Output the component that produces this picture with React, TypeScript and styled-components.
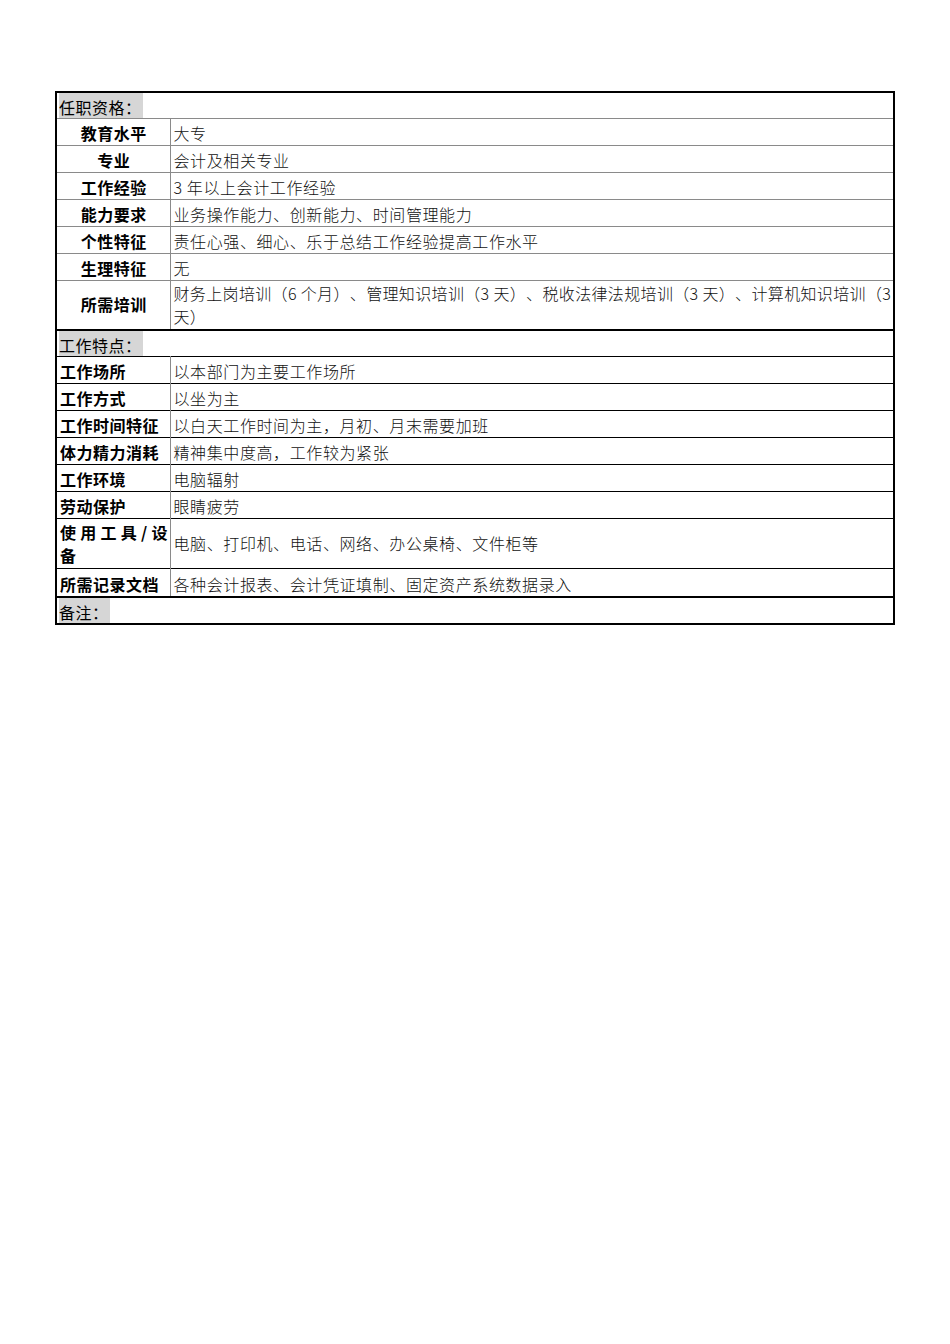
import React from "react";
import styled, { createGlobalStyle } from "styled-components";

const GlobalStyle = createGlobalStyle`
  html, body {
    margin: 0;
    padding: 0;
    background: #fff;
  }
  body {
    font-family: "Noto Sans CJK SC", "Liberation Sans", sans-serif;
    color: #000;
    text-spacing-trim: space-all;
  }
`;

const Page = styled.div`
  width: 950px;
  min-height: 1344px;
  padding: 91px 0 0 55px;
  box-sizing: border-box;
`;

const Sheet = styled.table`
  width: 840px;
  border-collapse: collapse;
  table-layout: fixed;
  border: 2px solid #000;
`;

const Row = styled.tr<{ $h?: number; $strong?: boolean; $thickBottom?: boolean }>`
  height: ${(p) => p.$h ?? 27}px;
  & > td {
    border-top: 1px solid ${(p) => (p.$strong ? "#000" : "#8a8a8a")};
    border-bottom: ${(p) => (p.$thickBottom ? "2px solid #000" : "none")};
  }
`;

const HeadCell = styled.td<{ $thickTop?: boolean }>`
  padding: 0 0 0 2px;
  vertical-align: bottom;
  border-top: ${(p) => (p.$thickTop ? "2px solid #000" : "none")};
  font-size: 16px;
  line-height: 21px;
`;

const Tag = styled.span<{ $w: number }>`
  display: inline-block;
  width: ${(p) => p.$w}px;
  background: #d6d6d6;
  letter-spacing: 0.5px;
  padding-top: 4px;
`;

const LabelCell = styled.td<{ $center?: boolean; $valign?: string }>`
  padding: 0 2px 1px 3px;
  border-right: 1px solid #8a8a8a;
  text-align: ${(p) => (p.$center ? "center" : "left")};
  vertical-align: ${(p) => p.$valign ?? "bottom"};
  font-size: 16px;
  font-weight: 700;
  line-height: 21px;
  letter-spacing: 0.5px;
  white-space: nowrap;
`;

const LabelLine = styled.span<{ $spread?: boolean }>`
  display: block;
  line-height: 23px;
  text-align: ${(p) => (p.$spread ? "justify" : "left")};
  text-align-last: ${(p) => (p.$spread ? "justify" : "auto")};
  letter-spacing: 0;
`;

const ValueCell = styled.td<{ $valign?: string; $tight?: boolean }>`
  padding: 0 0 1px 3px;
  vertical-align: ${(p) => p.$valign ?? "bottom"};
  font-size: 16px;
  font-weight: 300;
  line-height: 21px;
  letter-spacing: ${(p) => (p.$tight ? "0.35px" : "0.6px")};
  color: #111;
  white-space: nowrap;
  overflow: hidden;
`;

const ValueLine = styled.span`
  display: block;
  line-height: 23px;
`;

type Item = { label: string; value: React.ReactNode };

const qualifications: Item[] = [
  { label: "教育水平", value: "大专" },
  { label: "专业", value: "会计及相关专业" },
  { label: "工作经验", value: "3 年以上会计工作经验" },
  { label: "能力要求", value: "业务操作能力、创新能力、时间管理能力" },
  { label: "个性特征", value: "责任心强、细心、乐于总结工作经验提高工作水平" },
  { label: "生理特征", value: "无" },
];

const features: Item[] = [
  { label: "工作场所", value: "以本部门为主要工作场所" },
  { label: "工作方式", value: "以坐为主" },
  { label: "工作时间特征", value: "以白天工作时间为主，月初、月末需要加班" },
  { label: "体力精力消耗", value: "精神集中度高，工作较为紧张" },
  { label: "工作环境", value: "电脑辐射" },
  { label: "劳动保护", value: "眼睛疲劳" },
];

export default function App() {
  return (
    <Page>
      <GlobalStyle />
      <Sheet>
        <colgroup>
          <col style={{ width: 114 }} />
          <col />
        </colgroup>
        <tbody>
          <tr style={{ height: 26 }}>
            <HeadCell colSpan={2}>
              <Tag $w={84}>任职资格：</Tag>
            </HeadCell>
          </tr>
          {qualifications.map((q) => (
            <Row key={q.label}>
              <LabelCell $center>{q.label}</LabelCell>
              <ValueCell>{q.value}</ValueCell>
            </Row>
          ))}
          <Row $h={49} $thickBottom>
            <LabelCell $center $valign="middle">
              所需培训
            </LabelCell>
            <ValueCell $tight>
              <ValueLine>
                财务上岗培训（6 个月）、管理知识培训（3 天）、税收法律法规培训（3 天）、计算机知识培训（3
              </ValueLine>
              <ValueLine>天）</ValueLine>
            </ValueCell>
          </Row>
          <tr style={{ height: 27 }}>
            <HeadCell colSpan={2} $thickTop>
              <Tag $w={84}>工作特点：</Tag>
            </HeadCell>
          </tr>
          {features.map((f) => (
            <Row key={f.label} $strong>
              <LabelCell>{f.label}</LabelCell>
              <ValueCell>{f.value}</ValueCell>
            </Row>
          ))}
          <Row $h={50} $strong>
            <LabelCell>
              <LabelLine $spread>使用工具/设</LabelLine>
              <LabelLine>备</LabelLine>
            </LabelCell>
            <ValueCell $valign="middle">电脑、打印机、电话、网络、办公桌椅、文件柜等</ValueCell>
          </Row>
          <Row $strong $thickBottom $h={28}>
            <LabelCell>所需记录文档</LabelCell>
            <ValueCell>各种会计报表、会计凭证填制、固定资产系统数据录入</ValueCell>
          </Row>
          <tr style={{ height: 26 }}>
            <HeadCell colSpan={2} $thickTop>
              <Tag $w={51}>备注：</Tag>
            </HeadCell>
          </tr>
        </tbody>
      </Sheet>
    </Page>
  );
}
